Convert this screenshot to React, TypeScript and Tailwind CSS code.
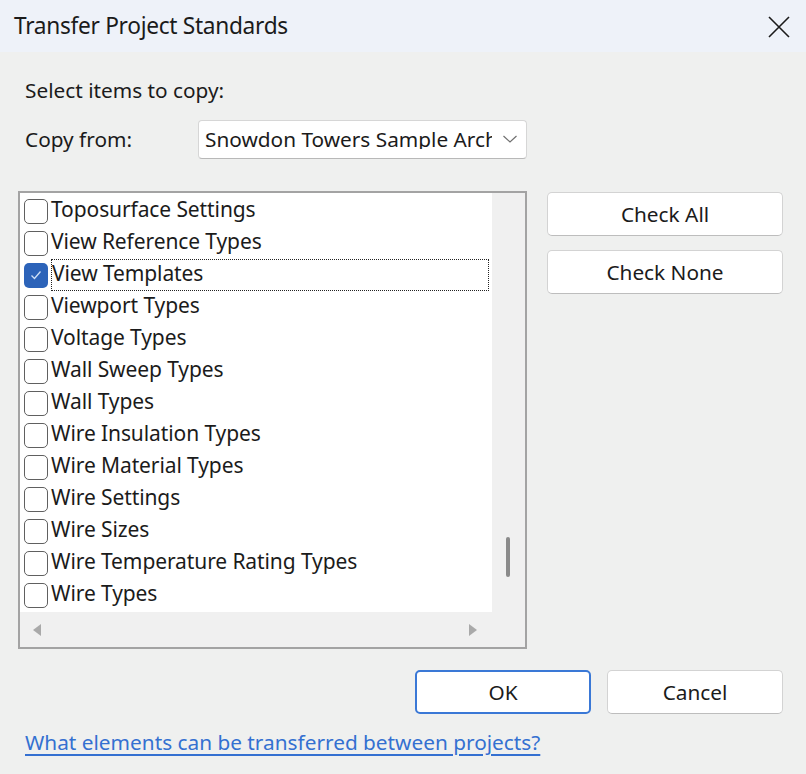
import React from "react";

const items = [
  "Toposurface Settings",
  "View Reference Types",
  "View Templates",
  "Viewport Types",
  "Voltage Types",
  "Wall Sweep Types",
  "Wall Types",
  "Wire Insulation Types",
  "Wire Material Types",
  "Wire Settings",
  "Wire Sizes",
  "Wire Temperature Rating Types",
  "Wire Types",
];

function Checkbox({ checked }: { checked: boolean }) {
  if (checked) {
    return (
      <div className="w-[24px] h-[25px] rounded-[5px] bg-[#2c63b9] flex items-center justify-center shrink-0">
        <svg width="14" height="14" viewBox="0 0 14 14">
          <path d="M2.5 7.5 L5.5 10.5 L11.5 3.5" fill="none" stroke="#cfe0f7" strokeWidth="1.3" />
        </svg>
      </div>
    );
  }
  return <div className="w-[24px] h-[25px] rounded-[5px] border-[1.5px] border-[#606060] bg-white shrink-0" />;
}

export default function App() {
  return (
    <div
      className="w-[806px] h-[774px] bg-[#eff0ef] flex flex-col text-[#1b1b1b]"
      style={{ fontFamily: '"Noto Sans", "Open Sans", sans-serif' }}
    >
      {/* title bar */}
      <div className="h-[52px] bg-[#eef2f9] flex items-center justify-between pl-[14px] pr-[16px] pt-[1px]">
        <span className="text-[22.7px] tracking-[-0.3px] leading-none">Transfer Project Standards</span>
        <svg width="22" height="22" viewBox="0 0 22 22">
          <path d="M1 1 L21 21 M21 1 L1 21" stroke="#1b1b1b" strokeWidth="1.6" />
        </svg>
      </div>

      <div className="flex flex-col pl-[18px] pr-[23px]">
        <div className="pl-[7px] mt-[24px] h-[28px] flex items-center text-[20.8px] leading-none">Select items to copy:</div>

        <div className="flex items-center mt-[15px] h-[40px]">
          <span className="pl-[7px] w-[180px] text-[20.8px] leading-none">Copy from:</span>
          <div className="w-[329px] h-[39px] bg-white border border-[#d6d6d6] border-b-[#b8b8b8] rounded-[4px] flex items-center pl-[6px] pr-[8px]">
            <span className="flex-1 overflow-hidden whitespace-nowrap text-[20.8px] leading-none">Snowdon Towers Sample Arch</span>
            <svg width="16" height="10" viewBox="0 0 16 10" className="ml-[10px]">
              <path d="M1.5 2 L8 8 L14.5 2" fill="none" stroke="#707070" strokeWidth="1.2" />
            </svg>
          </div>
        </div>

        <div className="flex mt-[32px]">
          {/* listbox */}
          <div className="w-[510px] h-[458px] border-2 border-[#a3a3a3] bg-[#f0f0f0] grid grid-cols-[472px_1fr] grid-rows-[419px_1fr]">
            <div className="bg-white pl-[4px] pt-[2px] flex flex-col">
              {items.map((it) => (
                <div key={it} className="h-[32px] flex items-center">
                  <Checkbox checked={it === "View Templates"} />
                  <div
                    className={`ml-[3px] flex-1 h-[32px] flex items-center text-[21px] leading-none tracking-[-0.1px] ${
                      it === "View Templates" ? "border border-dotted border-[#222] mr-[3px]" : ""
                    }`}
                  >
                    <span className="-mt-[3px]">{it}</span>
                  </div>
                </div>
              ))}
            </div>
            <div className="relative">
              <div className="absolute left-[14px] top-[344px] w-[4px] h-[40px] rounded-full bg-[#8a8a8a]" />
            </div>
            <div className="flex items-center justify-between pl-[12px] pr-[14px]">
              <svg width="10" height="14" viewBox="0 0 10 14">
                <path d="M9 1 L1 7 L9 13 Z" fill="#a9a9a9" />
              </svg>
              <svg width="10" height="14" viewBox="0 0 10 14">
                <path d="M1 1 L9 7 L1 13 Z" fill="#a9a9a9" />
              </svg>
            </div>
            <div />
          </div>

          {/* side buttons */}
          <div className="ml-[20px] flex flex-col gap-[14px] pt-[1px]">
            <button className="w-[236px] h-[44px] bg-white border border-[#d3d3d3] border-b-[#bdbdbd] rounded-[5px] text-[20.8px] leading-none">
              Check All
            </button>
            <button className="w-[236px] h-[44px] bg-white border border-[#d3d3d3] border-b-[#bdbdbd] rounded-[5px] text-[20.8px] leading-none">
              Check None
            </button>
          </div>
        </div>

        <div className="flex justify-end gap-[16px] mt-[21px]">
          <button className="w-[176px] h-[44px] bg-white border-2 border-[#3a78d6] rounded-[5px] text-[20.8px] leading-none">OK</button>
          <button className="w-[176px] h-[44px] bg-white border border-[#d3d3d3] border-b-[#bdbdbd] rounded-[5px] text-[20.8px] leading-none">
            Cancel
          </button>
        </div>

        <div className="pl-[7px] mt-[18px] text-[20.8px] leading-none text-[#3470d1] underline underline-offset-[4px]">
          What elements can be transferred between projects?
        </div>
      </div>
    </div>
  );
}
